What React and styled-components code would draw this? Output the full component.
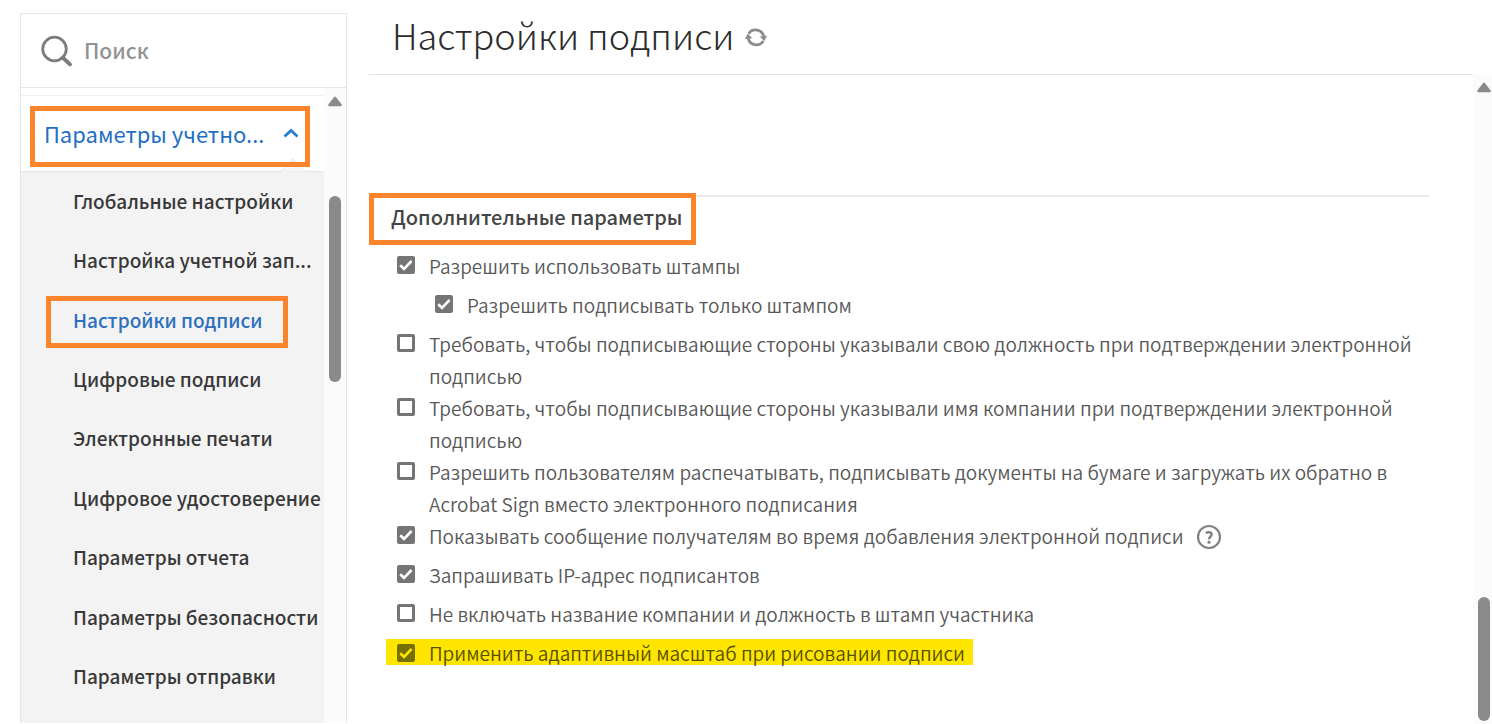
import React, { useState } from "react";
import styled, { createGlobalStyle, css } from "styled-components";

const links = [
  "Глобальные настройки",
  "Настройка учетной зап...",
  "Настройки подписи",
  "Цифровые подписи",
  "Электронные печати",
  "Цифровое удостоверение",
  "Параметры отчета",
  "Параметры безопасности",
  "Параметры отправки",
];

const initialOptions = [
  { id: "stamps", text: "Разрешить использовать штампы", checked: true },
  {
    id: "stamps-only",
    text: "Разрешить подписывать только штампом",
    checked: true,
    nested: true,
  },
  {
    id: "title",
    text: "Требовать, чтобы подписывающие стороны указывали свою должность при подтверждении электронной подписью",
    checked: false,
  },
  {
    id: "company",
    text: "Требовать, чтобы подписывающие стороны указывали имя компании при подтверждении электронной подписью",
    checked: false,
  },
  {
    id: "print",
    text: "Разрешить пользователям распечатывать, подписывать документы на бумаге и загружать их обратно в Acrobat Sign вместо электронного подписания",
    checked: false,
  },
  {
    id: "message",
    text: "Показывать сообщение получателям во время добавления электронной подписи",
    checked: true,
    help: true,
  },
  { id: "ip", text: "Запрашивать IP-адрес подписантов", checked: true },
  {
    id: "exclude",
    text: "Не включать название компании и должность в штамп участника",
    checked: false,
  },
  {
    id: "adaptive",
    text: "Применить адаптивный масштаб при рисовании подписи",
    checked: true,
    marked: true,
  },
];

const Scrollbar = ({ wide, top, thumbTop, thumbHeight }) => (
  <Track $wide={wide} $top={top}>
    <svg width="14" height="11" viewBox="0 0 14 11" aria-hidden="true">
      <path
        d="M7 2 12.5 9H1.5Z"
        fill="#8a8a8a"
        stroke="#8a8a8a"
        strokeWidth="2.6"
        strokeLinejoin="round"
      />
    </svg>
    <Thumb $top={thumbTop} $height={thumbHeight} />
  </Track>
);

const Option = ({ option, onToggle }) => (
  <OptionRow $nested={option.nested}>
    <OptionLabel htmlFor={option.id} $marked={option.marked}>
      <Box>
        <input
          id={option.id}
          type="checkbox"
          checked={option.checked}
          onChange={() => onToggle(option.id)}
        />
        {option.checked && (
          <svg width="18" height="18" viewBox="0 0 18 18" aria-hidden="true">
            <path
              d="M3.2 9.2 7 12.8 14.6 5"
              fill="none"
              stroke="currentColor"
              strokeWidth="2.6"
            />
          </svg>
        )}
      </Box>
      <span>{option.text}</span>
    </OptionLabel>
    {option.help && (
      <IconButton type="button" aria-label="Справка">
        <svg width="26" height="26" viewBox="0 0 26 26" aria-hidden="true">
          <circle
            cx="13"
            cy="13"
            r="11"
            fill="none"
            stroke="#828282"
            strokeWidth="2.2"
          />
          <path
            d="M9.9 9.1C11.6 7.7 15.6 7.7 15.6 10.5 15.6 12.6 13.1 12.7 13.1 15.3"
            fill="none"
            stroke="#828282"
            strokeWidth="2.5"
          />
          <circle cx="13" cy="18.2" r="1.6" fill="#828282" />
        </svg>
      </IconButton>
    )}
  </OptionRow>
);

const App = () => {
  const [open, setOpen] = useState(true);
  const [options, setOptions] = useState(initialOptions);

  const toggle = (id) =>
    setOptions(
      options.map((o) => (o.id === id ? { ...o, checked: !o.checked } : o))
    );

  return (
    <Page>
      <GlobalStyle />
      <Sidebar>
        <Search>
          <svg width="34" height="34" viewBox="0 0 34 34" aria-hidden="true">
            <circle
              cx="14.5"
              cy="15"
              r="11.8"
              fill="none"
              stroke="#7c7c7c"
              strokeWidth="2.8"
            />
            <path
              d="M22.8 23.6 30 30.4"
              stroke="#7c7c7c"
              strokeWidth="4"
              strokeLinecap="round"
            />
          </svg>
          <input type="search" placeholder="Поиск" aria-label="Поиск" />
        </Search>
        <SidebarBody>
          <Nav>
            <NavHeader>
              <Notch width="26" height="14" viewBox="0 0 26 14" aria-hidden="true">
                <path d="M0 13.5 13 1 26 13.5" fill="#f6f6f6" stroke="#e8e8e8" />
              </Notch>
              <NavToggle type="button" onClick={() => setOpen(!open)}>
                Параметры учетно...
                <svg
                  width="16"
                  height="10"
                  viewBox="0 0 16 10"
                  aria-hidden="true"
                >
                  <path
                    d="M1.5 8.5 8 2.5 14.5 8.5"
                    fill="none"
                    stroke="#2680d0"
                    strokeWidth="2.8"
                  />
                </svg>
              </NavToggle>
            </NavHeader>
            {open && (
              <NavList>
                {links.map((link) => (
                  <li key={link}>
                    <NavLink href="#" $active={link === "Настройки подписи"}>
                      {link}
                    </NavLink>
                  </li>
                ))}
              </NavList>
            )}
          </Nav>
          <Scrollbar wide top={8} thumbTop={89} thumbHeight={186} />
        </SidebarBody>
      </Sidebar>

      <Main>
        <Header>
          <h1>Настройки подписи</h1>
          <IconButton type="button" aria-label="Обновить">
            <svg width="24" height="24" viewBox="0 0 24 24" aria-hidden="true">
              <g fill="none" stroke="#8c8c8c" strokeWidth="2.8">
                <path d="M4.6 8.8A8.4 8.4 0 0 1 19.8 11.4" />
                <path d="M19.4 16A8.4 8.4 0 0 1 4.2 13.4" />
              </g>
              <path d="M15.6 11.6 23.2 10.8 20.2 16Z" fill="#8c8c8c" />
              <path d="M8.4 13.2 0.8 14 3.8 8.8Z" fill="#8c8c8c" />
            </svg>
          </IconButton>
        </Header>
        <MainBody>
          <Content>
            <SectionHeader>
              <h2>Дополнительные параметры</h2>
              <Divider />
            </SectionHeader>
            <OptionList>
              {options.map((option) => (
                <Option key={option.id} option={option} onToggle={toggle} />
              ))}
            </OptionList>
          </Content>
          <Scrollbar top={7} thumbTop={504} thumbHeight={124} />
        </MainBody>
      </Main>
    </Page>
  );
};

const GlobalStyle = createGlobalStyle`
  * {
    box-sizing: border-box;
  }
  body {
    margin: 0;
    background: #fff;
    font-family: "Noto Sans CJK SC", "Noto Sans", sans-serif;
    color: #2c2c2c;
  }
  h1, h2, ul {
    margin: 0;
    padding: 0;
  }
  ul {
    list-style: none;
  }
  input, button {
    font: inherit;
  }
`;

const highlight = "5px solid #fc842d";

const Page = styled.div`
  display: flex;
  height: 100vh;
  overflow: hidden;
`;

const Sidebar = styled.aside`
  display: flex;
  flex-direction: column;
  flex: none;
  width: 327px;
  margin: 13px 22px 1px 20px;
  border: 1px solid #e6e6e6;
  border-bottom: 0;
`;

const Search = styled.div`
  display: flex;
  align-items: center;
  gap: 10px;
  height: 74px;
  padding: 0 19px;
  border-bottom: 1px solid #e6e6e6;
  svg {
    flex: none;
  }
  input {
    flex: 1;
    min-width: 0;
    padding: 0 0 2px;
    border: 0;
    outline: 0;
    background: none;
    font-size: 21px;
    font-weight: 500;
    line-height: 32px;
    color: #2c2c2c;
  }
  input::placeholder {
    color: #929292;
    opacity: 1;
  }
`;

const SidebarBody = styled.div`
  display: flex;
  flex: 1;
  min-height: 0;
`;

const Nav = styled.nav`
  display: flex;
  flex-direction: column;
  flex: 1;
  min-width: 0;
  padding-top: 7px;
`;

const NavHeader = styled.div`
  position: relative;
  padding: 10px 14px 4px 9px;
  border-top: 1px solid #f0f0f0;
  border-bottom: 1px solid #e6e6e6;
`;

const Notch = styled.svg`
  position: absolute;
  right: 18px;
  bottom: -1px;
`;

const NavToggle = styled.button`
  position: relative;
  display: flex;
  align-items: center;
  justify-content: space-between;
  width: 100%;
  height: 61px;
  padding: 0 6px 7px 9px;
  border: ${highlight};
  background: none;
  font-size: 22px;
  line-height: 32px;
  color: #1f6fc4;
  cursor: pointer;
`;

const NavList = styled.ul`
  display: flex;
  flex-direction: column;
  flex: 1;
  padding: 1px 0 15px 25px;
  background: #f3f3f3;
  li {
    display: flex;
    align-items: center;
    flex: 1;
  }
`;

const NavLink = styled.a`
  height: 52px;
  padding: 0 20px 0 22px;
  border: 5px solid transparent;
  margin-right: -40px;
  font-size: 19px;
  font-weight: 500;
  line-height: 37px;
  white-space: nowrap;
  color: #383838;
  text-decoration: none;
  ${(p) =>
    p.$active &&
    css`
      border: ${highlight};
      color: #2a6fc0;
    `}
`;

const Track = styled.div`
  display: flex;
  flex-direction: column;
  align-items: center;
  flex: none;
  width: ${(p) => (p.$wide ? 22 : 19)}px;
  padding-top: ${(p) => p.$top}px;
  padding-left: ${(p) => (p.$wide ? 0 : 3)}px;
  background: #fbfbfb;
  svg {
    flex: none;
  }
`;

const Thumb = styled.div`
  flex: none;
  width: 12px;
  height: ${(p) => p.$height}px;
  margin-top: ${(p) => p.$top}px;
  border-radius: 6px;
  background: #8a8a8a;
`;

const Main = styled.main`
  display: flex;
  flex-direction: column;
  flex: 1;
  min-width: 0;
`;

const Header = styled.header`
  display: flex;
  align-items: center;
  gap: 10px;
  height: 75px;
  margin-right: 19px;
  padding-left: 23px;
  border-bottom: 1px solid #e4e4e4;
  h1 {
    padding-bottom: 7px;
    font-size: 36px;
    font-weight: 300;
    line-height: 60px;
  }
`;

const IconButton = styled.button`
  display: flex;
  padding: 0;
  border: 0;
  background: none;
  cursor: pointer;
`;

const MainBody = styled.div`
  display: flex;
  flex: 1;
  min-height: 0;
`;

const Content = styled.div`
  flex: 1;
  min-width: 0;
  padding: 118px 44px 0 0;
`;

const SectionHeader = styled.div`
  display: flex;
  h2 {
    padding: 0 9px 4px 17px;
    border: ${highlight};
    font-size: 20px;
    font-weight: 500;
    line-height: 38px;
    color: #444;
  }
`;

const Divider = styled.div`
  flex: 1;
  height: 4px;
  border-bottom: 2px solid #ebebeb;
`;

const OptionList = styled.ul`
  padding: 5px 0 0 17px;
`;

const OptionRow = styled.li`
  display: flex;
  align-items: flex-start;
  gap: 4px;
  min-height: 39px;
  padding-left: ${(p) => (p.$nested ? 38 : 0)}px;
  ${IconButton} {
    flex: none;
    margin-top: 4px;
  }
`;

const Box = styled.span`
  display: grid;
  flex: none;
  margin-top: 6px;
  color: #fff;
  input {
    grid-area: 1 / 1;
    appearance: none;
    width: 18px;
    height: 18px;
    margin: 0;
    border: 3px solid #757575;
    border-radius: 2px;
  }
  input:checked {
    background: #757575;
  }
  svg {
    grid-area: 1 / 1;
    pointer-events: none;
  }
`;

const OptionLabel = styled.label`
  display: flex;
  gap: 14px;
  padding: 0 8px 0 11px;
  font-size: 19px;
  font-weight: 350;
  line-height: 32px;
  color: #585858;
  ${(p) =>
    p.$marked &&
    css`
      height: 26px;
      margin-top: 2px;
      background: #ffe600;
      color: #585000;
      line-height: 27px;
      ${Box} {
        margin-top: 5px;
        color: #ffe600;
      }
      input:checked {
        border-color: #757000;
        background: #757000;
      }
    `}
`;

export default App;
